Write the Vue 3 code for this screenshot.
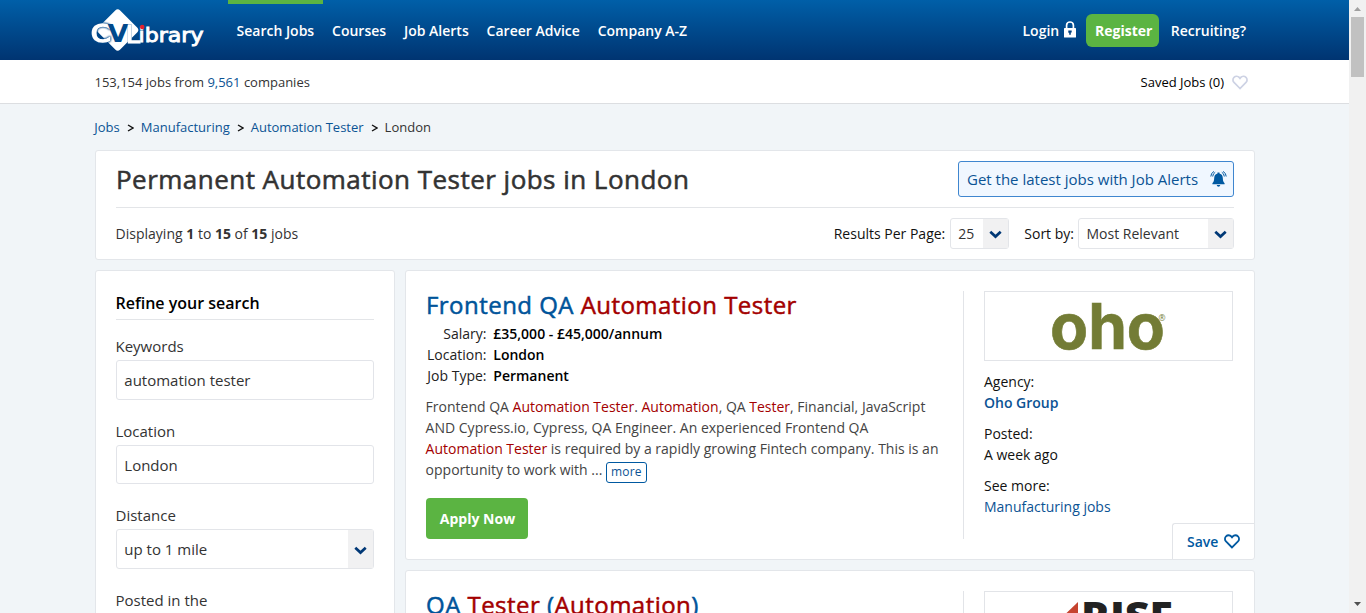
<script setup>
const nav = ['Search Jobs', 'Courses', 'Job Alerts', 'Career Advice', 'Company A-Z']
const crumbs = ['Jobs', 'Manufacturing', 'Automation Tester']
const facts = [
  ['Salary:', '£35,000 - £45,000/annum'],
  ['Location:', 'London'],
  ['Job Type:', 'Permanent'],
]
</script>

<template>
  <div class="window">
    <div class="page">
      <header class="header">
        <svg class="logo" viewBox="0 0 112 44" width="112" height="44">
          <rect x="10.200" y="6.500" width="31" height="31" rx="3.500" transform="rotate(45 25.700 22)" fill="#fff" />
          <text x="-1" y="34" font-size="25" textLength="20" lengthAdjust="spacingAndGlyphs" class="lt c">C</text>
          <text x="15.500" y="34" font-size="24" textLength="21" lengthAdjust="spacingAndGlyphs" class="lt v">V</text>
          <text x="34" y="34.500" font-size="24" textLength="14" lengthAdjust="spacingAndGlyphs" class="lt big">L</text>
          <text x="46.500" y="34" font-size="20" textLength="65" lengthAdjust="spacingAndGlyphs" class="lt lib">ibrary</text>
          <circle cx="50.200" cy="19" r="2.300" fill="#e4202c" />
        </svg>
        <nav class="nav">
          <a v-for="(n, i) in nav" :key="n" :class="{ on: i === 0 }">{{ n }}</a>
        </nav>
        <div class="account">
          <a>Login</a>
          <svg width="12" height="17" viewBox="0 0 12 17"><path d="M2.600 8V4.200a3.400 3.200 0 0 1 6.800 0V8" fill="none" stroke="#fff" stroke-width="1.700" /><rect x="0" y="7" width="12" height="9.500" rx=".6" fill="#fff" /><path d="M4.300 9.600h3.400v2H6.800v2.200H5.200v-2h-.9z" fill="#004080" /></svg>
          <a class="register">Register</a>
          <a class="recruit">Recruiting?</a>
        </div>
      </header>

      <div class="subbar">
        <span class="count">153,154 jobs from <b>9,561</b> companies</span>
        <span class="saved">Saved Jobs (0)</span>
        <svg width="16" height="15" viewBox="0 0 16 15"><path d="M8 13.500 2 7.400A3.500 3.500 0 0 1 2 2.400c1.500-1.600 4-1.500 5.200 0L8 3.400l.8-1c1.200-1.500 3.700-1.600 5.200 0a3.500 3.500 0 0 1 0 5z" fill="none" stroke="#cdd2e4" stroke-width="1.700" /></svg>
      </div>

      <main class="main">
        <div class="crumbs">
          <template v-for="c in crumbs" :key="c">
            <a>{{ c }}</a>
            <svg width="7" height="8" viewBox="0 0 7 8"><path d="M1 1 6 4 1 7" fill="none" stroke="#111" stroke-width="1.400" /></svg>
          </template>
          <span>London</span>
        </div>

        <section class="card top">
          <div class="titlerow">
            <h1>Permanent Automation Tester jobs in London</h1>
            <div class="alerts">
              <span>Get the latest jobs with Job Alerts</span>
              <svg width="17" height="17" viewBox="0 0 17 17">
                <path d="M7.500 1.600h2v1c2.300.6 3.200 2.200 3.300 4.500.1 2.800.6 4.100 1.800 5.100v1H2.400v-1c1.200-1 1.700-2.300 1.800-5.100.1-2.300 1-3.900 3.300-4.500z" fill="#0059a1" />
                <path d="M6.700 14h3.600q-.3 1.700-1.800 1.700T6.700 14z" fill="#0059a1" />
                <path d="M5.200 1.300Q2.900 2.500 2.700 5.500M4 .4Q.9 2 .8 5.500M11.800 1.300q2.300 1.200 2.500 4.200M13 .4q3.100 1.600 3.200 5.100" fill="none" stroke="#0059a1" stroke-width="1" />
              </svg>
            </div>
          </div>
          <div class="filters">
            <span class="showing">Displaying <b>1</b> to <b>15</b> of <b>15</b> jobs</span>
            <label class="rpp">Results Per Page:</label>
            <div class="select s25"><span>25</span><i><svg width="13" height="9" viewBox="0 0 13 9"><path d="M1.300 1.800 6.500 6.600 11.700 1.800" fill="none" stroke="#003876" stroke-width="2.700" /></svg></i></div>
            <label class="sort">Sort by:</label>
            <div class="select srel"><span>Most Relevant</span><i><svg width="13" height="9" viewBox="0 0 13 9"><path d="M1.300 1.800 6.500 6.600 11.700 1.800" fill="none" stroke="#003876" stroke-width="2.700" /></svg></i></div>
          </div>
        </section>

        <div class="columns">
          <aside class="card refine">
            <h2>Refine your search</h2>
            <label>Keywords</label>
            <div class="input tall">automation tester</div>
            <label>Location</label>
            <div class="input">London</div>
            <label>Distance</label>
            <div class="select dist"><span>up to 1 mile</span><i><svg width="13" height="9" viewBox="0 0 13 9"><path d="M1.300 1.800 6.500 6.600 11.700 1.800" fill="none" stroke="#003876" stroke-width="2.700" /></svg></i></div>
            <label>Posted in the</label>
          </aside>

          <div class="results">
            <article class="card job">
              <div class="info">
                <h3>Frontend QA <em>Automation Tester</em></h3>
                <dl>
                  <template v-for="f in facts" :key="f[0]"><dt>{{ f[0] }}</dt><dd>{{ f[1] }}</dd></template>
                </dl>
                <p>
                  <span>Frontend QA <em>Automation Tester</em>. <em>Automation</em>, QA <em>Tester</em>, Financial, JavaScript</span><br />
                  <span>AND Cypress.io, Cypress, QA Engineer. An experienced Frontend QA</span><br />
                  <span><em>Automation Tester</em> is required by a rapidly growing Fintech company. This is an</span><br />
                  <span>opportunity to work with ...</span><a class="more">more</a>
                </p>
                <a class="apply">Apply Now</a>
              </div>
              <div class="side">
                <div class="brand">
                  <svg width="247" height="68" viewBox="0 0 247 68">
                    <text x="65" y="57" font-size="63" textLength="115" lengthAdjust="spacingAndGlyphs" class="oho">oho</text>
                    <text x="173.500" y="28.500" font-size="8.500" class="reg">®</text>
                  </svg>
                </div>
                <div class="meta"><span>Agency:</span><a class="bold">Oho Group</a></div>
                <div class="meta"><span>Posted:</span><span>A week ago</span></div>
                <div class="meta"><span>See more:</span><a>Manufacturing jobs</a></div>
              </div>
              <div class="save"><span>Save</span>
                <svg width="16" height="15" viewBox="0 0 16 15"><path d="M8 13.500 2 7.400A3.500 3.500 0 0 1 2 2.400c1.500-1.600 4-1.500 5.200 0L8 3.400l.8-1c1.200-1.500 3.700-1.600 5.200 0a3.500 3.500 0 0 1 0 5z" fill="none" stroke="#0059a1" stroke-width="1.800" /></svg>
              </div>
            </article>

            <article class="card job">
              <div class="info">
                <h3>QA <em>Tester</em> (<em>Automation</em>)</h3>
              </div>
              <div class="side">
                <div class="brand">
                  <svg width="247" height="68" viewBox="0 0 247 68">
                    <path d="M93 10v22H70z" fill="#c6432f" />
                    <text x="96" y="38" font-size="38" textLength="92" lengthAdjust="spacingAndGlyphs" class="rise">RISE</text>
                  </svg>
                </div>
              </div>
            </article>
          </div>
        </div>
      </main>
    </div>
    <div class="scrollbar">
      <svg width="17" height="17" viewBox="0 0 17 17"><path d="M5 11 8.500 7 12 11z" fill="#a0a0a0" /></svg>
      <div class="thumb"></div>
      <svg class="down" width="17" height="17" viewBox="0 0 17 17"><path d="M5 6 8.500 10 12 6z" fill="#505050" /></svg>
    </div>
  </div>
</template>

<style>
html, body { overflow: hidden; }
</style>

<style scoped>
* { box-sizing: border-box; }
.window { display: flex; width: 1366px; height: 613px; overflow: hidden; background: #f1f5f8; font-family: "Open Sans", "Noto Sans", sans-serif; font-size: 14px; color: #333; line-height: 21px; white-space: nowrap; }
.page { width: 1349px; height: 613px; overflow: hidden; }
svg { display: block; flex: none; }
em { font-style: normal; color: #a30000; }
a { color: #0b5394; }
.header { height: 60px; background: linear-gradient(#005fa8, #003471); display: flex; padding-left: 92px; }
.logo { margin-top: 8px; overflow: visible; }
.lt { font-family: "DejaVu Sans", sans-serif; fill: #fff; }
.c { stroke: #fff; stroke-width: 1.600px; filter: drop-shadow(0 0 .8px #00498c) drop-shadow(0 0 .6px #00498c); }
.v { font-weight: 700; fill: #00498c; }
.big { stroke: #fff; stroke-width: 1.200px; filter: drop-shadow(0 0 .7px #00498c); }
.lib { stroke: #fff; stroke-width: .9px; }
.nav { display: flex; margin-left: 24px; }
.nav a { height: 60px; padding: 0 9.200px 0 8.700px; border-top: 4px solid transparent; line-height: 53px; color: #fff; font-weight: 600; }
.nav a.on { border-top-color: #5bb442; padding-left: 8.500px; }
.account { margin-left: auto; padding-right: 103px; display: flex; align-items: center; font-weight: 600; }
.account a { color: #fff; line-height: 34px; padding-top: 1px; }
.account svg { margin: -1px 10px 0 5px; }
.account .register { background: #5bb442; border-radius: 6px; height: 33px; width: 73px; text-align: center; font-weight: 700; margin-right: 11.500px; padding: 0 0 0 2px; }
.subbar { height: 44px; border-bottom: 1px solid #dcdee1; background: #fff; display: flex; align-items: center; padding: 2px 101.500px 0 94.500px; font-size: 13px; }
.subbar b { font-weight: 400; color: #0b5394; }
.saved { margin-left: auto; margin-right: 7.500px; color: #000; }
.main { width: 1160px; margin-left: 95px; }
.crumbs { height: 46px; display: flex; align-items: center; font-size: 13px; margin-left: -.7px; }
.crumbs svg { margin: 1px 7px 0 7px; }
.card { background: #fff; border: 1px solid #e3e6ea; border-radius: 3px; }
.top { height: 110px; padding: 0 20px; }
.titlerow { height: 57px; border-bottom: 1px solid #e3e5e8; display: flex; justify-content: space-between; }
h1 { margin: 0; font-size: 26px; line-height: 56px; font-weight: 500; letter-spacing: .47px; color: #333; -webkit-text-stroke: .55px #333; }
.alerts { width: 276px; height: 36px; margin-top: 10px; border: 1px solid #3f86cf; border-radius: 3px; background: #f0f7ff; display: flex; align-items: center; justify-content: space-between; padding: 0 6px 0 8px; font-size: 15px; color: #0b5394; }
.filters { display: flex; align-items: center; height: 50px; }
.filters label { color: #111; }
.showing { margin-right: auto; margin-left: -.4px; }
.select { display: flex; justify-content: space-between; border: 1px solid #e3e5e9; border-radius: 3px; background: #fff; padding-left: 7px; align-items: center; }
.select i { width: 25px; align-self: stretch; background: #f1f1f2; display: flex; align-items: center; justify-content: center; padding: 3px 0 0; }
.s25 { width: 59px; height: 31px; margin: 0 15px 0 5px; }
.srel { width: 156px; height: 31px; margin-left: 4px; padding-left: 7.500px; }
.columns { display: flex; gap: 10px; margin-top: 10px; align-items: flex-start; }
.refine { width: 300px; height: 900px; padding: 0 20px; font-size: 15px; display: flex; flex-direction: column; }
h2 { margin: 0 0 15px; height: 49px; padding-top: 21px; border-bottom: 1px solid #e3e5e8; font-size: 16px; font-weight: 600; color: #000; line-height: 22px; text-indent: -.5px; }
.refine label { height: 25px; line-height: 23px; margin-left: -.5px; }
.input { height: 39px; margin-bottom: 20px; border: 1px solid #e2e4e9; border-radius: 3px; line-height: 39px; padding-left: 7.300px; }
.input.tall { height: 40px; }
.select.dist { height: 40px; margin-bottom: 20px; padding-left: 7.300px; }
.results { flex: 1; display: flex; flex-direction: column; gap: 10px; }
.job { position: relative; height: 290px; display: flex; padding: 20px; }
.info { width: 538px; border-right: 1px solid #e2e4e8; }
h3 { margin: 0; font-size: 24px; line-height: 28px; font-weight: 500; letter-spacing: .46px; color: #00549a; -webkit-text-stroke: .5px; }
dl { margin: 4px 0 0; display: grid; grid-template-columns: 60.500px 1fr; column-gap: 6.800px; color: #222; }
dt { text-align: right; }
dd { margin: 0; font-weight: 600; color: #000; }
p { margin: 10px 0 0 -.4px; height: 84px; color: #444; }
.more { display: inline-block; height: 21px; width: 41px; margin-left: 3.500px; border: 1px solid #0059a1; border-radius: 3px; font-size: 12px; line-height: 18px; text-align: center; vertical-align: -1px; font-weight: 500; letter-spacing: .2px; }
.apply { display: block; width: 102px; height: 41px; margin-top: 18px; background: #5bb442; border-radius: 4px; color: #fff; font-weight: 700; text-align: center; line-height: 41px; padding-left: 1px; }
.side { width: 249px; margin-left: 20px; color: #111; }
.brand { height: 70px; border: 1px solid #e2e4e8; margin-bottom: 10px; overflow: hidden; }
.oho { font-family: Inter, sans-serif; font-weight: 700; fill: #737c35; stroke: #737c35; stroke-width: .6px; }
.reg { font-family: "Open Sans", sans-serif; fill: #737c35; }
.rise { font-family: "Open Sans", sans-serif; font-weight: 800; fill: #222; }
.meta { display: flex; flex-direction: column; margin-bottom: 10px; }
.bold { font-weight: 600; }
.save { position: absolute; right: 0; bottom: 0; width: 82px; height: 36px; border: 1px solid #e2e4e8; border-width: 1px 0 0 1px; border-radius: 3px 0 0; display: flex; align-items: center; gap: 6px; padding-left: 14px; font-weight: 600; color: #0059a1; }
.scrollbar { width: 17px; height: 613px; background: #f1f1f1; display: flex; flex-direction: column; }
.thumb { width: 13px; height: 60px; margin-left: 2px; background: #c1c1c1; }
.down { margin-top: auto; }
</style>
